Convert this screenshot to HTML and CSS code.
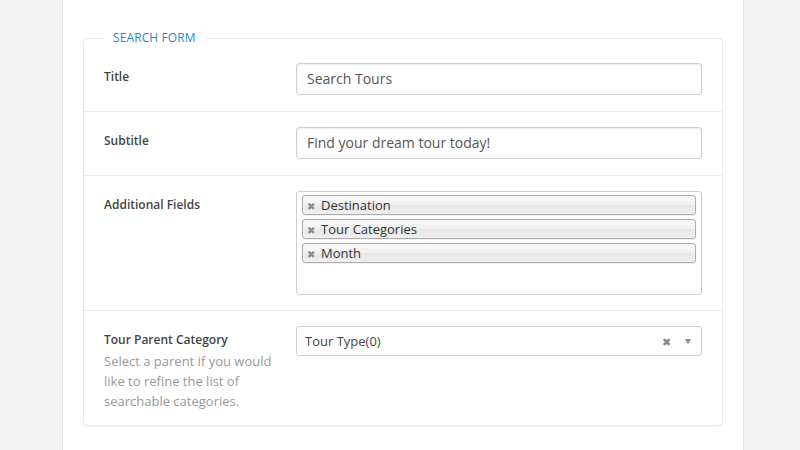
FILE: index.html
```html
<!DOCTYPE html>
<html>
<head>
<meta charset="utf-8">
<link rel="stylesheet" href="styles.css">
</head>
<body>
<div class="page">
  <div class="panel">
    <fieldset class="box">
      <legend class="legend">Search Form</legend>
      <div class="row">
        <div class="label-col"><div class="label">Title</div></div>
        <div class="field"><div class="input">Search Tours</div></div>
      </div>
      <div class="row">
        <div class="label-col"><div class="label">Subtitle</div></div>
        <div class="field"><div class="input">Find your dream tour today!</div></div>
      </div>
      <div class="row row-multi">
        <div class="label-col"><div class="label">Additional Fields</div></div>
        <div class="field">
          <div class="multi">
            <div class="tag"><span class="tag-x">✖</span>Destination</div>
            <div class="tag"><span class="tag-x">✖</span>Tour Categories</div>
            <div class="tag"><span class="tag-x">✖</span>Month</div>
          </div>
        </div>
      </div>
      <div class="row row-last">
        <div class="label-col">
          <div class="label">Tour Parent Category</div>
          <div class="desc">Select a parent if you would like to refine the list of searchable categories.</div>
        </div>
        <div class="field">
          <div class="select">
            <span class="select-text">Tour Type(0)</span>
            <span class="select-clear">✖</span>
            <span class="select-arrow"></span>
          </div>
        </div>
      </div>
    </fieldset>
  </div>
</div>
</body>
</html>
```
FILE: styles.css
```css
* { box-sizing: border-box; }
html, body { margin: 0; padding: 0; }
body {
  background: #f1f1f1;
  font-family: "Open Sans", "Noto Sans", sans-serif;
  color: #444;
  height: 450px;
  overflow: hidden;
}
.page {
  padding-left: 62px;
  height: 450px;
}
.panel {
  width: 682px;
  height: 450px;
  background: #fff;
  border-left: 1px solid #e2e2e2;
  border-right: 1px solid #e2e2e2;
  padding: 30px 20px 0 20px;
}
.box {
  margin: 0;
  padding: 0;
  border: 1px solid #e8e8e8;
  border-radius: 4px;
  box-shadow: 0 1px 1px rgba(0,0,0,0.04);
}
.legend {
  margin-left: 19px;
  padding: 0 10px;
  font-size: 12px;
  line-height: 16px;
  text-transform: uppercase;
  color: #2a88bf;
  letter-spacing: 0.1px;
}
.row {
  display: grid;
  grid-template-columns: 192px 1fr;
  padding: 15px 20px 16px 20px;
  border-top: 1px solid #ececec;
}
.row:first-of-type {
  border-top: none;
  padding-top: 17px;
}
.row-multi { padding-bottom: 15px; }
.row-last { padding-bottom: 14px; }
.label-col { padding-top: 5px; padding-right: 12px; }
.label {
  font-size: 12px;
  font-weight: 600;
  line-height: 18px;
  color: #444;
}
.desc {
  margin-top: 2px;
  font-size: 13px;
  line-height: 20px;
  color: #999;
}
.input {
  height: 32px;
  border: 1px solid #cfcfcf;
  border-radius: 3px;
  box-shadow: inset 0 1px 2px rgba(0,0,0,0.07);
  padding: 0 10px;
  font-size: 14px;
  line-height: 30px;
  color: #555;
}
.multi {
  height: 104px;
  border: 1px solid #cfcfcf;
  border-radius: 3px;
  padding: 3px 5px;
  display: flex;
  flex-direction: column;
  gap: 4px;
}
.tag {
  height: 20px;
  border: 1px solid #aaa;
  border-radius: 3px;
  background: linear-gradient(#f4f4f4 20%, #f0f0f0 50%, #e8e8e8 52%, #eee 100%);
  box-shadow: 0 0 2px #fff inset, 0 1px 0 rgba(0,0,0,0.05);
  font-size: 13px;
  line-height: 18px;
  color: #333;
  padding-left: 4px;
  display: flex;
  align-items: center;
}
.tag-x {
  font-size: 10px;
  color: #888;
  width: 14px;
  margin-right: 0;
  line-height: 18px;
  padding-top: 1px;
}
.select {
  height: 30px;
  border: 1px solid #cfcfcf;
  border-radius: 3px;
  display: flex;
  align-items: center;
  padding: 0 8px 0 8px;
  font-size: 13px;
  color: #444;
}
.select-text { flex: 1; }
.select-clear {
  font-size: 11px;
  color: #888;
  margin-right: 14px;
}
.select-arrow {
  width: 0;
  height: 0;
  border-left: 3.5px solid transparent;
  border-right: 3.5px solid transparent;
  border-top: 5px solid #888;
  margin-right: 2px;
}
```
